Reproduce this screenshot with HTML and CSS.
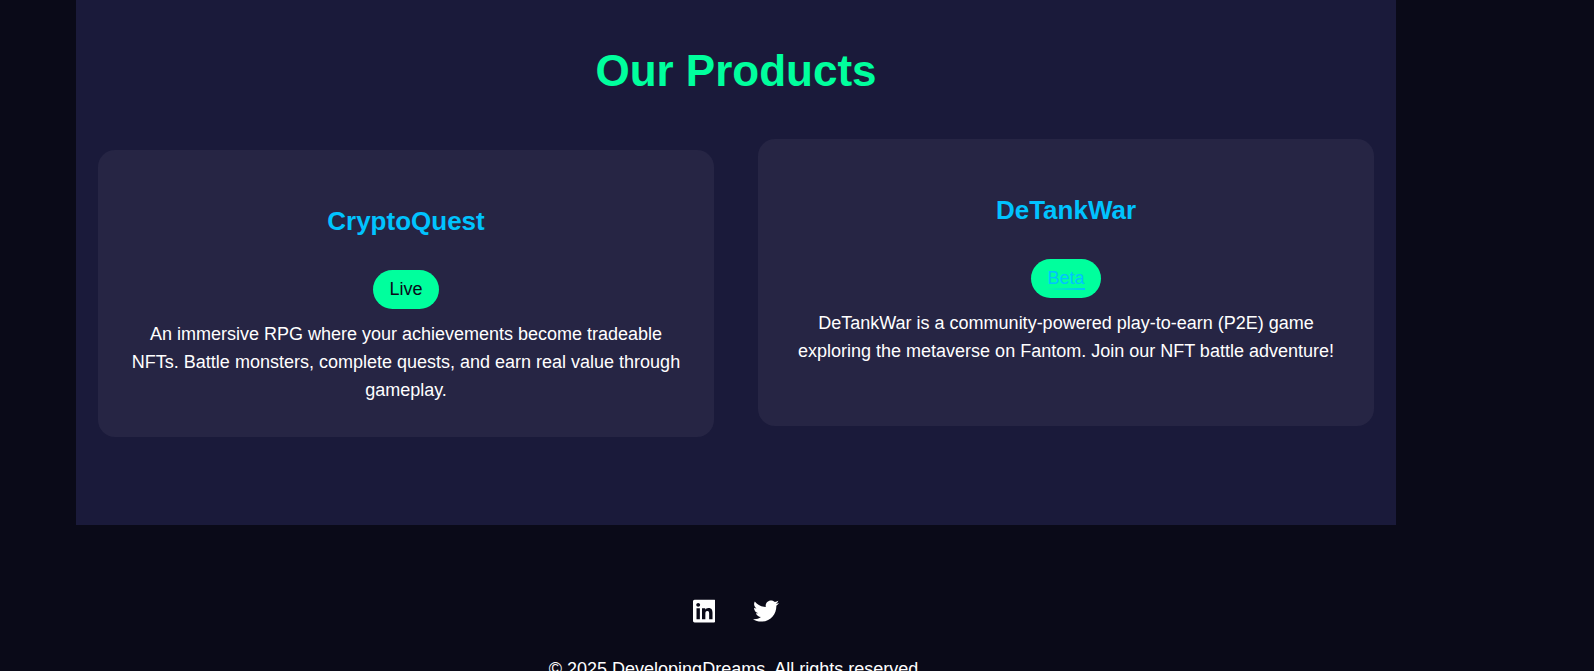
FILE: index.html
```html
<!DOCTYPE html>
<html lang="en">
<head>
<meta charset="utf-8">
<meta name="viewport" content="width=device-width, initial-scale=1">
<title>DevelopingDreams</title>
<link rel="stylesheet" href="styles.css">
</head>
<body>
<main class="products">
  <h2 class="products-title">Our Products</h2>
  <div class="product-grid">
    <article class="card">
      <h3 class="card-title">CryptoQuest</h3>
      <span class="badge">Live</span>
      <p class="card-text">An immersive RPG where your achievements become tradeable NFTs. Battle monsters, complete quests, and earn real value through gameplay.</p>
    </article>
    <article class="card card-raised">
      <h3 class="card-title">DeTankWar</h3>
      <span class="badge"><a class="badge-link" href="#">Beta</a></span>
      <p class="card-text">DeTankWar is a community-powered play-to-earn (P2E) game exploring the metaverse on Fantom. Join our NFT battle adventure!</p>
    </article>
  </div>
</main>
<footer class="footer">
  <nav class="social" aria-label="Social">
    <a class="social-link" href="#" aria-label="LinkedIn">
      <svg class="social-icon" viewBox="0 0 448 512" aria-hidden="true"><path d="M416 32H31.9C14.3 32 0 46.5 0 64.3v383.4C0 465.500 14.300 480 31.900 480H416c17.600 0 32-14.500 32-32.300V64.300c0-17.800-14.400-32.300-32-32.300zM135.400 416H69V202.200h66.500V416zm-33.200-243c-21.300 0-38.500-17.300-38.500-38.500S80.900 96 102.200 96c21.200 0 38.500 17.300 38.500 38.500 0 21.300-17.200 38.500-38.500 38.500zm282.100 243h-66.400V312c0-24.800-.5-56.700-34.500-56.700-34.600 0-39.900 27-39.900 54.900V416h-66.400V202.200h63.700v29.200h.9c8.900-16.800 30.600-34.500 62.900-34.500 67.200 0 79.700 44.300 79.700 101.900V416z"/></svg>
    </a>
    <a class="social-link" href="#" aria-label="Twitter">
      <svg class="social-icon" viewBox="0 0 512 512" aria-hidden="true"><path d="M459.370 151.716c.325 4.548.325 9.097.325 13.645 0 138.720-105.583 298.558-298.558 298.558-59.452 0-114.680-17.219-161.137-47.106 8.447.974 16.568 1.299 25.340 1.299 49.055 0 94.213-16.568 130.274-44.832-46.132-.975-84.792-31.188-98.112-72.772 6.498.974 12.995 1.624 19.818 1.624 9.421 0 18.843-1.300 27.614-3.573-48.081-9.747-84.143-51.980-84.143-102.985v-1.299c13.969 7.797 30.214 12.670 47.431 13.319-28.264-18.843-46.781-51.005-46.781-87.391 0-19.492 5.197-37.360 14.294-52.954 51.655 63.675 129.300 105.258 216.365 109.807-1.624-7.797-2.599-15.918-2.599-24.040 0-57.828 46.782-104.934 104.934-104.934 30.213 0 57.502 12.670 76.670 33.137 23.715-4.548 46.456-13.320 66.599-25.340-7.798 24.366-24.366 44.833-46.132 57.827 21.117-2.273 41.584-8.122 60.426-16.243-14.292 20.791-32.161 39.308-52.628 54.253z"/></svg>
    </a>
  </nav>
  <p class="copyright">© 2025 DevelopingDreams. All rights reserved.</p>
</footer>
</body>
</html>
```
FILE: styles.css
```css
* {
  box-sizing: border-box;
}

body {
  height: 100vh;
  margin: 0;
  padding-right: 122px;
  overflow: hidden;
  background: #0a0a18;
  color: #fff;
  font-family: "Liberation Sans", Arial, sans-serif;
  font-size: 18px;
  line-height: 28px;
}

.products {
  max-width: 1320px;
  margin: 0 auto;
  padding: 36px 22px 88px;
  background: #1a1a3a;
}

.products-title {
  margin: 0 0 33px;
  color: #00ff9d;
  font-size: 44px;
  line-height: 70px;
  text-align: center;
}

.product-grid {
  display: grid;
  grid-template-columns: 1fr 1fr;
  gap: 44px;
}

.card {
  margin-top: 11px;
  padding: 50px 33px 33px;
  border-radius: 17px;
  background: #262544;
  text-align: center;
}

.card-raised {
  margin: 0 0 11px;
}

.card-title {
  margin: 0 0 28px;
  color: #00c3ff;
  font-size: 26px;
  line-height: 42px;
}

.badge {
  display: inline-block;
  padding: 5px 16px 6px;
  border-radius: 20px;
  background: #00ff9d;
  color: #0a0a18;
}

.badge-link {
  display: block;
  color: #00c3ff;
  text-decoration: none;
  background: linear-gradient(90deg, #00ff9d, #00c3ff) left bottom 2px / 100% 2px no-repeat;
}

.card-text {
  margin: 11px 0 0;
}

.footer {
  padding: 70px 22px 35px;
  text-align: center;
}

.social {
  display: flex;
  justify-content: center;
  gap: 38px;
  margin-bottom: 28px;
}

.social-link {
  display: flex;
  padding: 3px 0;
  color: #fff;
}

.social-icon {
  height: 26px;
  fill: currentColor;
}

.copyright {
  margin: 0;
}
```
